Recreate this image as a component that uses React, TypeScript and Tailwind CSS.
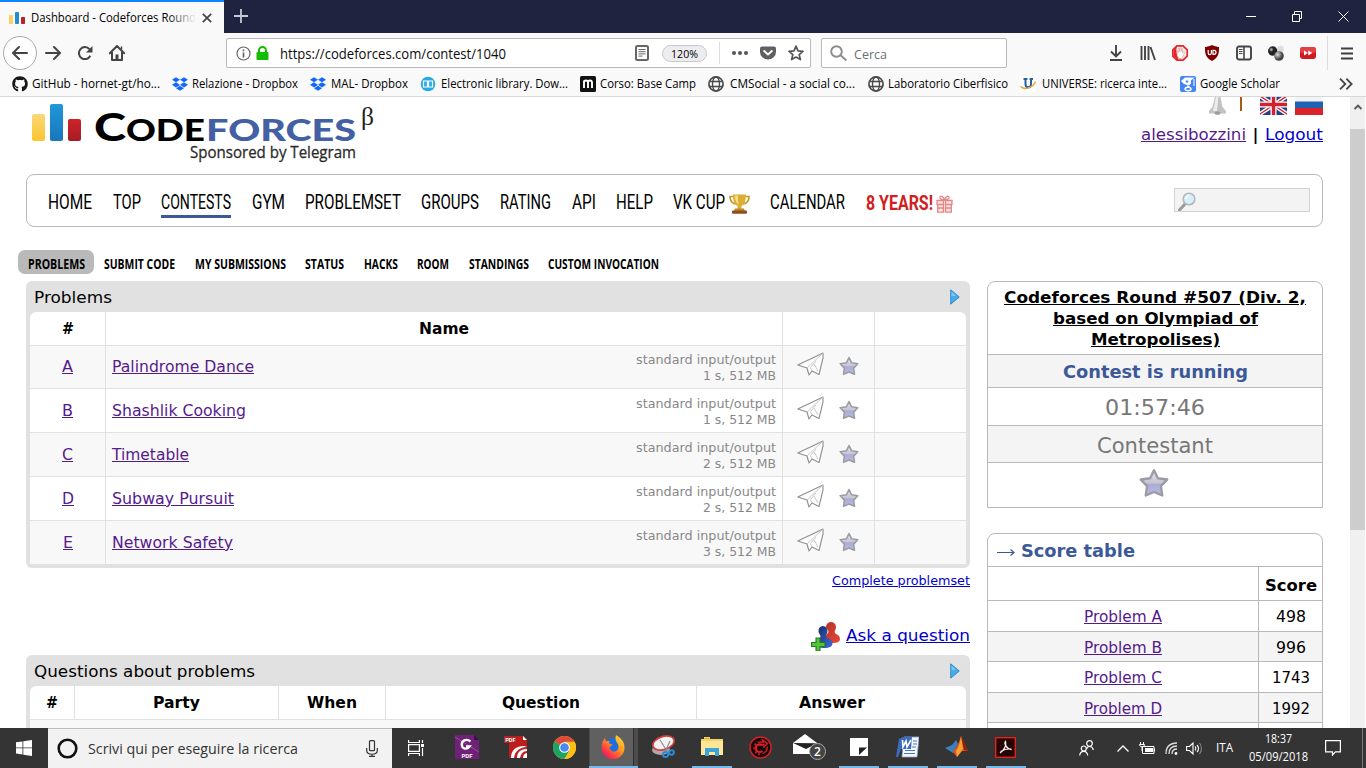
import React, { useLayoutEffect, useRef } from "react";
import { FaGithub, FaDropbox } from "react-icons/fa";

/* Single line of text stretched to the width of its box. */
function Fit({ className = "", children }: { className?: string; children: React.ReactNode }) {
  const outer = useRef<HTMLSpanElement>(null);
  const inner = useRef<HTMLSpanElement>(null);
  useLayoutEffect(() => {
    const o = outer.current;
    const i = inner.current;
    if (!o || !i || !i.offsetWidth) return;
    i.style.transform = `scaleX(${o.clientWidth / i.getBoundingClientRect().width})`;
  }, []);
  return (
    <span ref={outer} className={"block shrink-0 whitespace-nowrap " + className}>
      <span ref={inner} className="inline-block origin-left align-top [text-decoration:inherit]">
        {children}
      </span>
    </span>
  );
}

const UI = "font-['Open_Sans','Noto_Sans',sans-serif]";

/* ---------- browser chrome ---------- */

function Bars({ className }: { className: string }) {
  return (
    <svg className={className} viewBox="0 0 16 12">
      <rect x="0" y="3" width="4" height="9" rx=".8" fill="#fbd063" />
      <rect x="6" y="0" width="4" height="12" rx=".8" fill="#1f8fd0" />
      <rect x="12" y="5" width="4" height="7" rx=".8" fill="#c01e28" />
    </svg>
  );
}

function TabBar() {
  return (
    <div className="flex h-[33px] shrink-0 bg-[#202340]">
      <div className="flex w-[224px] items-center border-t-2 border-[#0a84ff] bg-[#f9f9fa] pl-[9px]">
        <Bars className="h-[12px] w-[16px]" />
        <div className="relative ml-[6px]">
          <Fit className={"w-[165px] text-[12px] leading-[20px] text-black " + UI}>Dashboard - Codeforces Round</Fit>
          <div className="absolute top-0 right-0 h-5 w-7 bg-linear-to-r from-transparent to-[#f9f9fa]" />
        </div>
        <svg className="ml-[6px] h-[10px] w-[10px]" viewBox="0 0 10 10" stroke="#444" strokeWidth="1.7">
          <path d="M.8.8l8.4 8.4M9.2.8L.8 9.2" />
        </svg>
      </div>
      <svg className="mt-[9px] ml-[10px] h-[14px] w-[14px]" viewBox="0 0 14 14" stroke="#c8c8d2" strokeWidth="1.8">
        <path d="M7 0v14M0 7h14" />
      </svg>
      <svg className="mt-[11px] ml-auto h-[11px] w-[104px]" viewBox="0 0 104 11" fill="none" stroke="#fff" strokeWidth="1">
        <path d="M0 5.500h10M46.500 3.500h7v7h-7zM48.500 3v-2.500h7v7h-2.500M92.500.5l10 10M102.500.5l-10 10" />
      </svg>
      <div className="w-[16px]" />
    </div>
  );
}

function Toolbar() {
  return (
    <div className={"flex h-[37px] shrink-0 items-center bg-[#f9f9fa] pt-[3px] " + UI}>
      <div className="ml-[3px] flex h-[34px] w-[34px] items-center justify-center rounded-full border border-[#a9a9a9] bg-white">
        <svg className="h-4 w-4" viewBox="0 0 16 16" fill="none" stroke="#444" strokeWidth="2" strokeLinecap="round" strokeLinejoin="round">
          <path d="M15 8H1.500M7 2L1 8l6 6" />
        </svg>
      </div>
      <svg className="ml-[8px] h-4 w-4" viewBox="0 0 16 16" fill="none" stroke="#444" strokeWidth="2" strokeLinecap="round" strokeLinejoin="round">
        <path d="M1 8h13.500M9 2l6 6-6 6" />
      </svg>
      <svg className="ml-[16px] h-4 w-4" viewBox="0 0 16 16" fill="none" stroke="#444" strokeWidth="2">
        <path d="M13.300 10.800A6 6 0 1 1 12.500 4.200" />
        <path d="M15.500 1v6.500H9z" fill="#444" stroke="none" />
      </svg>
      <svg className="ml-[16px] h-4 w-4" viewBox="0 0 16 16" fill="none" stroke="#444" strokeWidth="2" strokeLinejoin="round">
        <path d="M.8 8.200L8 1l7.200 7.200M3 7v8h10V7" strokeLinecap="round" />
        <path d="M6.500 15V9.500h3V15z" fill="#444" stroke="none" />
        <path d="M12.500 1.500v3" strokeWidth="1.500" />
      </svg>

      <div className="ml-[101px] flex h-[30px] w-[585px] items-center rounded-[2px] border border-[#b9b9bb] bg-white">
        <svg className="ml-[9px] h-[15px] w-[15px]" viewBox="0 0 15 15" fill="none" stroke="#666">
          <circle cx="7.500" cy="7.500" r="6.500" strokeWidth="1.200" />
          <path d="M7.500 6.500v5M7.500 3.500v1.800" strokeWidth="1.700" />
        </svg>
        <svg className="ml-[5px] h-[14px] w-[13px]" viewBox="0 0 13 14">
          <path d="M3 7V4.500a3.500 3.500 0 0 1 7 0V7" fill="none" stroke="#12bc00" strokeWidth="2" />
          <rect x=".5" y="6" width="12" height="8" rx="1" fill="#12bc00" />
        </svg>
        <Fit className="mt-[2px] ml-[11px] w-[226px] text-[14px] leading-[20px] text-[#0c0c0d]">https://codeforces.com/contest/1040</Fit>
        <svg className="ml-[129px] h-4 w-[14px]" viewBox="0 0 14 16" fill="none" stroke="#666">
          <rect x="1" y="1" width="12" height="14" rx="1.500" strokeWidth="2" />
          <path d="M3.500 4.500h7M3.500 6.700h7M3.500 8.900h7M3.500 11.100h4" />
        </svg>
        <div className="ml-[13px] flex h-[17px] w-[45px] justify-center rounded-full border border-[#c9c9cb] bg-[#ededf0]">
          <Fit className="w-[27px] text-[11px] leading-[16px] text-black">120%</Fit>
        </div>
        <div className="ml-[12px] h-[22px] w-px bg-[#dcdcde]" />
        <svg className="ml-[12px] h-[4px] w-4" viewBox="0 0 16 4" fill="#555">
          <circle cx="2" cy="2" r="2" /><circle cx="8" cy="2" r="2" /><circle cx="14" cy="2" r="2" />
        </svg>
        <svg className="ml-[12px] h-4 w-4" viewBox="0 0 16 16">
          <path d="M2 1.500h12a2 2 0 0 1 2 2V7a8 7.500 0 0 1-16 0V3.500a2 2 0 0 1 2-2z" fill="#606063" />
          <path d="M4.200 6L8 9.500 11.800 6" fill="none" stroke="#fff" strokeWidth="2" strokeLinecap="round" strokeLinejoin="round" />
        </svg>
        <svg className="ml-[12px] h-4 w-4" viewBox="0 0 16 16" fill="none" stroke="#555" strokeWidth="1.700" strokeLinejoin="round">
          <path d="M8 1.200l2 4.600 5 .5-3.800 3.300 1.200 5L8 12l-4.400 2.600 1.200-5L1 6.300l5-.5z" />
        </svg>
      </div>

      <div className="ml-[10px] flex h-[30px] w-[186px] items-center rounded-[2px] border border-[#b9b9bb] bg-white">
        <svg className="ml-[8px] h-4 w-[17px]" viewBox="0 0 17 16" fill="none" stroke="#8c8c8c" strokeWidth="1.900">
          <circle cx="6.500" cy="6.500" r="5.300" /><path d="M10.300 10l6 5.500" />
        </svg>
        <Fit className="mt-[2px] ml-[7px] w-[33px] text-[13px] leading-[20px] text-[#6f6f70]">Cerca</Fit>
      </div>

      <div className="ml-[93px] flex w-[224px] [&>div]:flex [&>div]:w-8 [&>div]:justify-center [&_svg]:h-4 [&_svg]:w-4">
        <div>
          <svg viewBox="0 0 16 16" fill="none" stroke="#444" strokeWidth="1.900"><path d="M8 0v11M3 6.500l5 5 5-5M2 15h12" /></svg>
        </div>
        <div>
          <svg viewBox="0 0 16 16" stroke="#444" strokeWidth="1.900" fill="none"><path d="M1.500 1v14M5 1v14M8.500 1v14M10.500 2l4.500 13" /></svg>
        </div>
        <div>
          <svg viewBox="0 0 16 16">
            <path d="M5 .8h6L15.200 5v6L11 15.200H5L.8 11V5z" fill="#f4f4f4" stroke="#ea2328" strokeWidth="1.700" />
            <path d="M5.200 10.500L4.600 6l1.200-.3.400 2V3.600h1.200l.3 3V2.800h1.200l.2 3.800.5-3h1.100l-.1 4.400 1-1.200 1 .6-1.800 4.400L9.500 13.500H7z" fill="#fff" stroke="#d9a0a0" strokeWidth=".7" />
            <path d="M1.500 5l3.200-3.300L4.300 6l.8 5 1.700 3.500H5L1.500 11z" fill="#ea2328" />
          </svg>
        </div>
        <div>
          <svg viewBox="0 0 16 16">
            <path d="M8 0c2 1.200 4.500 1.800 7 2 .2 7-1 11-7 14C2 13 .8 9 1 2c2.500-.2 5-.8 7-2z" fill="#800000" />
            <path d="M4.200 5v3a1.600 1.600 0 0 0 3.200 0V5" fill="none" stroke="#fff" strokeWidth="1.200" />
            <path d="M9 5.300h1a2 2 0 0 1 0 4H9z" fill="none" stroke="#fff" strokeWidth="1.200" />
          </svg>
        </div>
        <div>
          <svg viewBox="0 0 16 16" fill="none" stroke="#444">
            <rect x="1" y="1.500" width="14" height="13" rx="2" strokeWidth="1.900" />
            <path d="M8 2v12" strokeWidth="1.600" /><path d="M3 4.500h3.500M3 6.500h3.500M3 8.500h3.500" />
          </svg>
        </div>
        <div>
          <svg viewBox="0 0 16 16">
            <defs>
              <radialGradient id="ball" cx=".35" cy=".35"><stop offset="0" stopColor="#ddd" /><stop offset="1" stopColor="#444" /></radialGradient>
              <radialGradient id="dark" cx=".35" cy=".35"><stop offset="0" stopColor="#ccc" /><stop offset=".5" stopColor="#222" /></radialGradient>
            </defs>
            <circle cx="12.500" cy="4" r="3.300" fill="#ddd" /><circle cx="4.700" cy="6" r="4.700" fill="url(#dark)" /><circle cx="11" cy="11" r="4.800" fill="url(#ball)" />
          </svg>
        </div>
        <div>
          <svg viewBox="0 0 16 16">
            <rect y="2" width="16" height="12" rx="3" fill="#cf1a20" /><rect y="2" width="16" height="6" rx="3" fill="#e34146" />
            <path d="M4 5.500L8 8l-4 2.500zM8.300 5.500L12.300 8l-4 2.500z" fill="#fff" />
          </svg>
        </div>
      </div>
      <div className="ml-[3px] h-[34px] w-px bg-[#dcdcde]" />
      <svg className="ml-[13px] h-[13px] w-[12px]" viewBox="0 0 12 13" stroke="#3f3f40" strokeWidth="2"><path d="M0 1.500h12M0 6.500h12M0 11.500h12" /></svg>
    </div>
  );
}

function Globe() {
  return (
    <svg className="h-4 w-4" viewBox="0 0 16 16" fill="none" stroke="#4a4a4a" strokeWidth="1.300">
      <circle cx="8" cy="8" r="7.100" strokeWidth="1.700" /><ellipse cx="8" cy="8" rx="3.500" ry="7" /><path d="M1.500 5.500h13M1.500 10.500h13" />
    </svg>
  );
}

const bookmarks: { icon: React.ReactNode; text: string; cls: string }[] = [
  { icon: <FaGithub className="h-4 w-4 text-[#15181b]" />, text: "GitHub - hornet-gt/ho...", cls: "ml-[4px] w-[128px] mr-[12px]" },
  { icon: <FaDropbox className="h-4 w-4 text-[#1268fb]" />, text: "Relazione - Dropbox", cls: "ml-[4px] w-[106px] mr-[12px]" },
  { icon: <FaDropbox className="h-4 w-4 text-[#1268fb]" />, text: "MAL- Dropbox", cls: "ml-[5px] w-[77px] mr-[12px]" },
  {
    icon: (
      <svg className="h-4 w-4" viewBox="0 0 16 16">
        <circle cx="8" cy="8" r="7.300" fill="#29abe2" />
        <path d="M3.500 5h4v6h-4zM8.500 5h4v6h-4z" fill="none" stroke="#fff" strokeWidth="1.200" />
      </svg>
    ),
    text: "Electronic library. Dow...", cls: "ml-[5px] w-[127px] mr-[12px]",
  },
  {
    icon: (
      <svg className="h-4 w-4" viewBox="0 0 16 16">
        <rect width="16" height="16" rx="1.500" fill="#111" />
        <path d="M4 12V4.500M4 6.500a2 2 0 0 1 4 0V12M8 6.500a2 2 0 0 1 4 0V12" fill="none" stroke="#fff" strokeWidth="1.900" />
      </svg>
    ),
    text: "Corso: Base Camp", cls: "ml-[4px] w-[96px] mr-[12px]",
  },
  { icon: <Globe />, text: "CMSocial - a social co...", cls: "ml-[6px] w-[125px] mr-[13px]" },
  { icon: <Globe />, text: "Laboratorio Ciberfisico", cls: "ml-[4px] w-[120px] mr-[12px]" },
  {
    icon: (
      <svg className="h-4 w-4" viewBox="0 0 16 16" fill="none">
        <rect width="16" height="16" fill="#fff" />
        <path d="M5.500 3v5a2.500 3 0 0 0 5.500 0V3M3.500 3h4M9.500 3H13" stroke="#24639f" strokeWidth="2" />
        <path d="M.5 10.500c5 4.500 13 .5 15-5" stroke="#eaa53c" strokeWidth="1.500" />
      </svg>
    ),
    text: "UNIVERSE: ricerca inte...", cls: "ml-[6px] w-[125px] mr-[13px]",
  },
  {
    icon: (
      <svg className="h-4 w-4" viewBox="0 0 16 16" fill="none" stroke="#fff">
        <rect width="16" height="16" rx="2" fill="#4285f4" stroke="none" />
        <path d="M1 5l4-3.500h9.500L11 4.500v3L9 9.500 4 8z" fill="#fff" stroke="none" />
        <circle cx="7" cy="5.500" r="1.700" fill="#4285f4" /><path d="M8 9.500c-1 1.500 3 1.500 3 3.500s-5 2.500-6 .3c0-1.500 2-2.300 4.500-2.300" strokeWidth="1.500" /><path d="M14 3v7" />
      </svg>
    ),
    text: "Google Scholar", cls: "ml-[4px] w-[80px]",
  },
];

function Bookmarks() {
  return (
    <div className={"flex h-[27px] shrink-0 items-center border-b border-[#d7d7d7] bg-[#f9f9fa] pt-[2px] pl-[12px] text-[12px] leading-[20px] text-black " + UI}>
      {bookmarks.map((b) => (
        <React.Fragment key={b.text}>
          {b.icon}
          <Fit className={b.cls}>{b.text}</Fit>
        </React.Fragment>
      ))}
      <svg className="mr-[13px] ml-auto h-[12px] w-[14px]" viewBox="0 0 14 12" fill="none" stroke="#4a4a4a" strokeWidth="1.900">
        <path d="M1 .7L6.300 6 1 11.300M7.300.7L12.600 6l-5.300 5.300" />
      </svg>
    </div>
  );
}

/* ---------- page ---------- */

function StarIcon({ className }: { className: string }) {
  return (
    <svg className={className} viewBox="0 0 20 20">
      <defs>
        <linearGradient id="star" x1="0" y1="0" x2="0" y2="1">
          <stop offset="0" stopColor="#e2e2e6" /><stop offset=".5" stopColor="#c6c6d4" /><stop offset=".55" stopColor="#abacd2" /><stop offset="1" stopColor="#b9bbea" />
        </linearGradient>
      </defs>
      <path d="M10 1.500l2.600 5.300 6.200.9-4.200 4.400.9 6.200L10 16l-5.500 2.300.9-6.200L1.200 7.700l6.200-.9z" fill="url(#star)" stroke="#9c9ca6" strokeWidth="1.600" strokeLinejoin="round" />
    </svg>
  );
}

function Plane() {
  return (
    <svg className="h-[24px] w-[27px]" viewBox="0 0 27 24" fill="#fdfdfd" stroke="#8f8f8f" strokeWidth="1.100" strokeLinejoin="round">
      <path d="M26 1L.8 13l9.200 3 2 7 3-4 7 3.500L26 6z" />
      <path d="M26 1L10 16M15 19L13.500 15.500M17 12l4 7M19 9l-5.500 6.500" fill="none" stroke="#c4c4c4" strokeWidth=".9" />
    </svg>
  );
}

function Arrow() {
  return (
    <svg className="h-[16px] w-[10px]" viewBox="0 0 10 16">
      <path d="M.7.8L9.300 8 .7 15.200z" fill="#4baae3" stroke="#2f8fd3" strokeLinejoin="round" />
      <path d="M1.500 2.500L6 7H1.500z" fill="#7cc6ef" />
    </svg>
  );
}

function Header() {
  return (
    <div className="flex h-[77px] shrink-0">
      <svg className="ml-[6px] h-[70px] w-[345px]" viewBox="32 97 345 70">
        <defs>
          <linearGradient id="ly" x1="0" y1="0" x2="0" y2="1"><stop offset="0" stopColor="#fbd779" /><stop offset="1" stopColor="#fbc52e" /></linearGradient>
          <linearGradient id="lb" x1="0" y1="0" x2="0" y2="1"><stop offset="0" stopColor="#2098d8" /><stop offset="1" stopColor="#1a75bb" /></linearGradient>
          <linearGradient id="lr" x1="0" y1="0" x2="0" y2="1"><stop offset="0" stopColor="#cf2229" /><stop offset="1" stopColor="#a51d24" /></linearGradient>
        </defs>
        <rect x="32" y="114" width="13" height="27" rx="2" fill="url(#ly)" />
        <rect x="50" y="104" width="13" height="37" rx="2" fill="url(#lb)" />
        <rect x="68" y="119" width="13" height="22" rx="2" fill="url(#lr)" />
        <g className="font-['Lato',sans-serif] font-black">
          <text x="94" y="141" fontSize="37" textLength="32" lengthAdjust="spacingAndGlyphs" fill="#000">C</text>
          <text x="126" y="141" fontSize="31" textLength="79" lengthAdjust="spacingAndGlyphs" fill="#000">ODE</text>
          <text x="206" y="141" fontSize="31" textLength="150" lengthAdjust="spacingAndGlyphs" fill="#4260a3">FORCES</text>
        </g>
        <text x="190" y="158" fontSize="16" textLength="166" lengthAdjust="spacingAndGlyphs" fill="#2b2b2b" stroke="#2b2b2b" strokeWidth=".3" className="font-['Open_Sans',sans-serif]">Sponsored by Telegram</text>
        <text x="361" y="125" fontSize="26" textLength="13" lengthAdjust="spacingAndGlyphs" fill="#222" className="font-['Liberation_Serif',serif]">β</text>
      </svg>
      <div className="ml-auto flex w-[182px] flex-col">
        <div className="flex h-[19px] items-start pl-[67px]">
          <svg className="h-[18px] w-[19px]" viewBox="0 0 19 18">
            <path d="M7 0h5.500l2 10 3.500 4v2.500H1V14l3.500-4z" fill="#c2c2c2" /><path d="M8 0h2.500L9 14H5z" fill="#ececec" /><ellipse cx="9.500" cy="16" rx="3" ry="1.800" fill="#9c9c9c" />
          </svg>
          <div className="ml-[13px] h-[14px] w-[2px] bg-[#a85a10]" />
          <svg className="ml-[18px] h-[18px] w-[27px]" viewBox="0 0 27 18">
            <rect width="27" height="18" fill="#2b3f86" />
            <path d="M0-1L27 17M27-1L0 17" stroke="#fff" strokeWidth="4" /><path d="M0-1L27 17M27-1L0 17" stroke="#d3202f" strokeWidth="1.400" />
            <path d="M13.500 0v18M0 7.500h27" stroke="#fff" strokeWidth="6" /><path d="M13.500 0v18M0 7.500h27" stroke="#d3202f" strokeWidth="3.400" />
          </svg>
          <svg className="ml-[8px] h-[18px] w-[28px]" viewBox="0 0 28 18">
            <rect width="28" height="18" fill="#f4f4f4" /><rect y="4.500" width="28" height="7" fill="#2063b4" /><rect y="11" width="28" height="7" fill="#dc2128" />
          </svg>
        </div>
        <div className="mt-[9px] flex text-[16.500px] leading-[20px]">
          <Fit className="w-[105px] text-[#551a8b] underline">alessibozzini</Fit>
          <Fit className="ml-[6px] w-[7px]">|</Fit>
          <Fit className="ml-[6px] w-[58px] text-[#0000cc] underline">Logout</Fit>
        </div>
      </div>
    </div>
  );
}

const menu: [string, string][] = [
  ["HOME", "ml-[21px] w-[44px]"],
  ["TOP", "ml-[21px] w-[28px]"],
  ["CONTESTS", "ml-[20px] w-[70px] h-[30px] border-b-3 border-[#3b5998]"],
  ["GYM", "ml-[21px] w-[33px]"],
  ["PROBLEMSET", "ml-[20px] w-[96px]"],
  ["GROUPS", "ml-[20px] w-[58px]"],
  ["RATING", "ml-[21px] w-[51px]"],
  ["API", "ml-[21px] w-[24px]"],
  ["HELP", "ml-[20px] w-[37px]"],
  ["VK CUP", "ml-[20px] w-[52px]"],
];

function Menu() {
  return (
    <div className="flex h-[53px] shrink-0 items-start rounded-lg border border-[#b9b9b9] pt-[13px] pr-[12px] font-['Roboto',sans-serif] text-[19.500px] leading-[30px] text-black">
      {menu.map(([t, c]) => (
        <Fit key={t} className={c}>{t}</Fit>
      ))}
      <svg className="mt-[6px] ml-[4px] h-[20px] w-[21px]" viewBox="0 0 21 20">
        <path d="M4.500 2.500H1c0 5 2.500 7 6 7.500M16.500 2.500H20c0 5-2.500 7-6 7.500" fill="none" stroke="#c9971f" strokeWidth="1.600" />
        <path d="M4 .5h13c0 6-1.500 10-4.500 11.500V15h-4v-3C5.500 10.500 4 6.500 4 .5z" fill="#dcae34" />
        <path d="M6 1.500h3c-.5 4 0 7 1 9.500C7 9 6 6 6 1.500z" fill="#f8e08a" />
        <path d="M6 14.500h9l1 2.500H5z" fill="#c08a2c" /><rect x="3" y="16.500" width="15" height="3.200" rx="1" fill="#8d4f1c" />
      </svg>
      <Fit className="ml-[20px] w-[75px]">CALENDAR</Fit>
      <Fit className="ml-[21px] mt-px w-[67px] font-bold text-[#d0211f]">8 YEARS!</Fit>
      <svg className="mt-[7px] ml-[3px] h-[18px] w-[17px]" viewBox="0 0 17 18" fill="none" stroke="#e58585" strokeWidth="1.300">
        <path d="M1 5.500h6.500v4H1zM9.500 5.500H16v4H9.500zM1.700 9.500h5.800v7.700H1.700zM9.500 9.500h5.800v7.700H9.500z" fill="#fae5e5" />
        <path d="M8 5C5 5 3.500 3.500 4 2s3.500-1 4.500 3C9.500 1 12.500.5 13 2s-1.500 3-4 3z" /><path d="M2 13h5M10 13h5" />
      </svg>
      <div className="ml-auto h-[24px] w-[136px] border border-[#d3d3d3] bg-[#f3f3f3]">
        <svg className="mt-[3px] ml-[3px] h-[19px] w-[18px]" viewBox="0 0 18 19">
          <path d="M7 12l-5.500 6" stroke="#9a9a9a" strokeWidth="3" strokeLinecap="round" />
          <circle cx="11" cy="7" r="5.800" fill="#d6effc" stroke="#b3b7ba" strokeWidth="1.600" /><path d="M8 7a3 3 0 0 1 3-3" stroke="#fff" strokeWidth="1.500" fill="none" />
        </svg>
      </div>
    </div>
  );
}

function SubMenu() {
  return (
    <div className="mt-[23px] -ml-[8px] flex h-[24px] shrink-0 font-['Open_Sans',sans-serif] text-[13.500px] leading-[28px] font-bold text-black">
      <div className="flex w-[76px] justify-center rounded-[7px] bg-[#b9b9b9]"><Fit className="w-[57px]">PROBLEMS</Fit></div>
      <Fit className="ml-[10px] w-[71px]">SUBMIT CODE</Fit>
      <Fit className="ml-[20px] w-[91px]">MY SUBMISSIONS</Fit>
      <Fit className="ml-[19px] w-[39px]">STATUS</Fit>
      <Fit className="ml-[20px] w-[34px]">HACKS</Fit>
      <Fit className="ml-[19px] w-[32px]">ROOM</Fit>
      <Fit className="ml-[20px] w-[60px]">STANDINGS</Fit>
      <Fit className="ml-[19px] w-[111px]">CUSTOM INVOCATION</Fit>
    </div>
  );
}

const problems = [
  { id: "A", name: "Palindrome Dance", w: "w-[142px]", lim: "1 s, 512 MB", row: "h-[42px] [&>div]:bg-[#f8f8f8]", idw: "w-[11px]" },
  { id: "B", name: "Shashlik Cooking", w: "w-[134px]", lim: "1 s, 512 MB", row: "h-[43px] [&>div]:bg-white", idw: "w-[11px]" },
  { id: "C", name: "Timetable", w: "w-[77px]", lim: "2 s, 512 MB", row: "h-[43px] [&>div]:bg-[#f8f8f8]", idw: "w-[11px]" },
  { id: "D", name: "Subway Pursuit", w: "w-[122px]", lim: "2 s, 512 MB", row: "h-[43px] [&>div]:bg-white", idw: "w-[12px]" },
  { id: "E", name: "Network Safety", w: "w-[121px]", lim: "3 s, 512 MB", row: "h-[43px] [&>div]:bg-[#f8f8f8]", idw: "w-[10px]" },
];

function ProblemsBox() {
  return (
    <div className="rounded-[6px] bg-[#e1e1e1] px-[4px] pb-[4px]">
      <div className="flex h-[31px] items-center justify-between pr-[6px] pl-[4px]">
        <Fit className="mt-[2px] w-[78px] leading-[20px]">Problems</Fit>
        <Arrow />
      </div>
      <div className="flex flex-col gap-px overflow-hidden rounded-t-[6px]">
        <div className="flex h-[33px] gap-px font-bold [&>div]:flex [&>div]:items-center [&>div]:justify-center [&>div]:bg-white">
          <div className="w-[75px]"><Fit className="w-[12px]">#</Fit></div>
          <div className="w-[676px]"><Fit className="w-[50px]">Name</Fit></div>
          <div className="w-[91px]" />
          <div className="w-[91px]" />
        </div>
        {problems.map((p) => (
          <div key={p.id} className={"flex shrink-0 gap-px [&>div]:flex [&>div]:items-center " + p.row}>
            <div className="w-[75px] justify-center"><Fit className={"text-[#551a8b] underline " + p.idw}>{p.id}</Fit></div>
            <div className="w-[676px] justify-between pr-[6px] pl-[6px]">
              <Fit className={"text-[#551a8b] underline " + p.w}>{p.name}</Fit>
              <div className="flex flex-col items-end pt-[2px] text-[13px] leading-[16px] text-[#888]">
                <Fit className="w-[140px]">standard input/output</Fit>
                <Fit className="w-[73px]">{p.lim}</Fit>
              </div>
            </div>
            <div className="w-[91px] pl-[14px]">
              <div className="-mt-[6px]"><Plane /></div>
              <StarIcon className="-mt-[2px] ml-[15px] h-[20px] w-[20px]" />
            </div>
            <div className="w-[91px]" />
          </div>
        ))}
      </div>
    </div>
  );
}

function Ask() {
  return (
    <div className="mt-[28px] flex h-[34px] items-center justify-end">
      <svg className="h-[29px] w-[29px]" viewBox="0 0 29 29">
        <defs>
          <linearGradient id="rd" x1="0" y1="0" x2="1" y2="1"><stop offset="0" stopColor="#b43222" /><stop offset="1" stopColor="#e8473a" /></linearGradient>
          <linearGradient id="bl" x1="0" y1="0" x2="1" y2="1"><stop offset="0" stopColor="#16275f" /><stop offset="1" stopColor="#3f6fe0" /></linearGradient>
        </defs>
        <path d="M20 0a5 5 0 0 1 5 5c0 3-2 4-1 6 1 1.500 5 2 5 6 0 3-3 4-8 4s-7-2-7-5 3-4 3.500-6S15 7 15 5a5 5 0 0 1 5-5z" fill="url(#rd)" />
        <path d="M12 4a5 5 0 0 1 4.500 5c0 3-2 4-1 6s6 2 6 6.500c0 3-3 4.500-8 4.500S5 24 5.500 21 9 17 9.500 15 7 11 7.500 9A5 5 0 0 1 12 4z" fill="url(#bl)" />
        <path d="M5 16h4v4.500h5v4H9V29H5v-4.500H.5v-4H5z" fill="#55c43c" stroke="#217d18" strokeWidth="1.100" />
      </svg>
      <Fit className="ml-[6px] w-[124px] text-[#0000cc] underline">Ask a question</Fit>
    </div>
  );
}

function QuestionsBox() {
  return (
    <div className="mt-[2px] rounded-t-[6px] bg-[#e1e1e1] px-[4px]">
      <div className="flex h-[31px] items-center justify-between pr-[6px] pl-[4px]">
        <Fit className="mt-[2px] w-[221px] leading-[20px]">Questions about problems</Fit>
        <Arrow />
      </div>
      <div className="flex h-[33px] gap-px overflow-hidden rounded-t-[6px] font-bold [&>div]:flex [&>div]:items-center [&>div]:justify-center [&>div]:bg-white">
        <div className="w-[44px]"><Fit className="w-[12px]">#</Fit></div>
        <div className="w-[203px]"><Fit className="w-[47px]">Party</Fit></div>
        <div className="w-[106px]"><Fit className="w-[50px]">When</Fit></div>
        <div className="w-[310px]"><Fit className="w-[78px]">Question</Fit></div>
        <div className="w-[269px]"><Fit className="w-[66px]">Answer</Fit></div>
      </div>
      <div className="mt-px h-[20px] bg-[#f8f8f8]" />
    </div>
  );
}

const scores = [
  { p: "Problem A", s: "498", w: "w-[30px]", row: "h-[31px]" },
  { p: "Problem B", s: "996", w: "w-[30px]", row: "h-[30px] bg-[#f4f4f4]" },
  { p: "Problem C", s: "1743", w: "w-[38px]", row: "h-[31px]" },
  { p: "Problem D", s: "1992", w: "w-[38px]", row: "h-[30px] bg-[#f4f4f4]" },
];

function Sidebar() {
  return (
    <div className="ml-[17px] w-[336px]">
      <div className="flex flex-col overflow-hidden rounded-t-lg border border-[#b9b9b9] [&>div]:flex [&>div]:items-center [&>div]:justify-center">
        <div className="h-[73px] flex-col border-b border-[#b9b9b9] leading-[21px] font-bold underline">
          <Fit className="w-[302px] underline">Codeforces Round #507 (Div. 2,</Fit>
          <Fit className="w-[205px] underline">based on Olympiad of</Fit>
          <Fit className="w-[129px] underline">Metropolises)</Fit>
        </div>
        <div className="h-[33px] border-b border-[#b9b9b9] bg-[#f4f4f4] pt-[2px] text-[18px] font-bold text-[#3b5998]"><Fit className="w-[185px]">Contest is running</Fit></div>
        <div className="h-[38px] border-b border-[#b9b9b9] pt-[2px] text-[22px] text-[#777]"><Fit className="w-[100px]">01:57:46</Fit></div>
        <div className="h-[37px] border-b border-[#b9b9b9] bg-[#f4f4f4] pt-[3px] text-[22px] text-[#777]"><Fit className="w-[116px]">Contestant</Fit></div>
        <div className="h-[44px] pr-[2px] pb-[5px]"><StarIcon className="h-[30px] w-[30px]" /></div>
      </div>
      <div className="mt-[25px] rounded-t-lg border border-[#b9b9b9]">
        <div className="flex h-[33px] items-center border-b border-[#b9b9b9] pt-[2px] pl-[9px] text-[18px] text-[#3b5998]">
          <svg className="mt-[3px] h-[9px] w-[18px]" viewBox="0 0 18 9" fill="none" stroke="#3b5998" strokeWidth="1.200"><path d="M0 4.500h17M13.500 1.500l3.500 3-3.500 3" /></svg>
          <Fit className="ml-[6px] w-[114px] font-bold">Score table</Fit>
        </div>
        <div className="flex h-[34px] border-b border-[#b9b9b9] font-bold">
          <div className="w-[271px] border-r border-[#b9b9b9]" />
          <div className="flex flex-1 items-center justify-center pt-[4px]"><Fit className="w-[52px]">Score</Fit></div>
        </div>
        {scores.map((r) => (
          <div key={r.p} className={"flex border-b border-[#b9b9b9] text-[15px] " + r.row}>
            <div className="flex w-[271px] items-center justify-center border-r border-[#b9b9b9] pt-[2px]"><Fit className="w-[78px] text-[#551a8b] underline">{r.p}</Fit></div>
            <div className="flex flex-1 items-center justify-center pt-[2px]"><Fit className={r.w}>{r.s}</Fit></div>
          </div>
        ))}
        <div className="h-[31px] w-[271px] border-r border-[#b9b9b9]" />
      </div>
    </div>
  );
}

function Page() {
  return (
    <div className="flex h-[631px] shrink-0 overflow-hidden bg-white font-['DejaVu_Sans',sans-serif] text-[16.500px] leading-[20px] text-black">
      <div className="ml-[26px] flex h-[631px] w-[1297px] flex-col overflow-visible">
        <Header />
        <Menu />
        <SubMenu />
        <div className="mt-[7px] flex shrink-0">
          <div className="w-[944px]">
            <ProblemsBox />
            <div className="flex justify-end pt-[3px] text-[13px]">
              <Fit className="w-[138px] text-[#0000cc] underline">Complete problemset</Fit>
            </div>
            <Ask />
            <QuestionsBox />
          </div>
          <Sidebar />
        </div>
      </div>
      <div className="ml-auto flex w-[16px] flex-col items-center border-r border-white bg-[#f0f0f0]">
        <div className="flex h-[32px] items-start pt-[7px]">
          <svg className="h-[6px] w-[8px]" viewBox="0 0 8 6" fill="none" stroke="#555" strokeWidth="1.800"><path d="M.6 5L4 1.500 7.400 5" /></svg>
        </div>
        <div className="h-[401px] w-full bg-[#cdcdcd]" />
      </div>
    </div>
  );
}

/* ---------- taskbar ---------- */

const apps: { key: string; cell: string; active?: boolean; icon: React.ReactNode }[] = [
  {
    key: "foxit", cell: "border-transparent",
    icon: (
      <svg className="h-6 w-6" viewBox="0 0 24 24">
        <path d="M0 0h19l5 5v19H0z" fill="#6f2177" /><path d="M19 0v5h5z" fill="#3b0f44" /><path d="M0 2l24 15" stroke="#a770ab" strokeWidth=".6" />
        <path d="M15.500 6.500C11 3 6.500 6 6.800 10s5 5 7.700 1.500H11" fill="none" stroke="#fff" strokeWidth="2.400" />
        <text x="6.500" y="22.500" fontSize="6" fill="#fff" className="font-['Roboto',sans-serif] font-bold">PDF</text>
      </svg>
    ),
  },
  {
    key: "pdf", cell: "border-transparent",
    icon: (
      <svg className="h-6 w-6" viewBox="0 0 24 24">
        <path d="M5 1h14l4 4v18H5z" fill="#c01c1c" /><path d="M19 1v4h4z" fill="#fff" />
        <path d="M7 23c0-8 5-12 13-12l3 1c-7 0-12 4-13 11zM13 23c0-6 4-9 10-9v2c-4 0-6 3-7 7zM19 23c0-3 1.500-4.500 4-5v5z" fill="#fff" />
        <rect y="1" width="13" height="7" fill="#a92626" /><text x="1.300" y="6.800" fontSize="5.500" fill="#fff" className="font-['Roboto',sans-serif] font-bold">PDF</text>
      </svg>
    ),
  },
  {
    key: "chrome", cell: "border-transparent",
    icon: (
      <svg className="h-[23px] w-[23px]" viewBox="0 0 24 24">
        <circle cx="12" cy="12" r="12" fill="#fbc116" />
        <path d="M12 12L1.600 6A12 12 0 0 1 22.400 6z" fill="#dd4b3e" /><path d="M12 12L1.600 6A12 12 0 0 0 12 24l5.200-9z" fill="#1da362" /><path d="M22.400 6H12v6l5.200 3L12 24A12 12 0 0 0 22.400 6z" fill="#fbc116" />
        <circle cx="12" cy="12" r="5.600" fill="#fff" /><circle cx="12" cy="12" r="4.500" fill="#4a8af4" />
      </svg>
    ),
  },
  {
    key: "firefox", cell: "border-[#76b9ed]", active: true,
    icon: (
      <svg className="h-[24px] w-[24px]" viewBox="0 0 24 24">
        <defs><linearGradient id="ff" x1="1" y1="0" x2=".2" y2="1"><stop offset="0" stopColor="#ffe83e" /><stop offset=".45" stopColor="#ff9a1c" /><stop offset=".8" stopColor="#ff3647" /><stop offset="1" stopColor="#d81b7c" /></linearGradient></defs>
        <circle cx="12" cy="12" r="9" fill="#1a6fe0" />
        <path d="M15 0c5 3 8.500 6.500 8.500 12.500A11.500 11.500 0 0 1 .5 13C.5 8 2 5 4 3l.8 3L9 6c-2 2-1 3 2.500 3.500-.5 2-3 1.500-3 3.500 2 5.500 9 4 9-1 0-4-3-5-3-8 0-2 .3-3 .5-4z" fill="url(#ff)" />
      </svg>
    ),
  },
  {
    key: "snip", cell: "border-transparent",
    icon: (
      <svg className="h-6 w-6" viewBox="0 0 24 24">
        <ellipse cx="10" cy="15" rx="9" ry="5" fill="#b9a5a5" /><ellipse cx="12.500" cy="8" rx="11" ry="6.500" transform="rotate(-18 12.500 8)" fill="#f3f3f3" stroke="#d23c3c" strokeWidth="1.700" />
        <path d="M9 5l7 11M19 6l-4.500 10" stroke="#888" strokeWidth="1.100" /><circle cx="14.500" cy="19.500" r="2.600" fill="none" stroke="#2c8bd3" strokeWidth="2" /><circle cx="20.500" cy="17.500" r="2.300" fill="none" stroke="#2c8bd3" strokeWidth="2" />
      </svg>
    ),
  },
  {
    key: "explorer", cell: "border-[#76b9ed]",
    icon: (
      <svg className="h-[20px] w-[22px]" viewBox="0 0 22 20">
        <path d="M0 2h3V0h6v2h13v16H0z" fill="#f3d06b" /><path d="M0 4h22v14H0z" fill="#ffe797" /><path d="M4 11h14v8h-4v-4H8v4H4z" fill="#3aa5dc" /><path d="M3 2l1-1h4v1z" fill="#e7a52f" />
      </svg>
    ),
  },
  {
    key: "gear", cell: "border-transparent",
    icon: (
      <svg className="h-[23px] w-[23px]" viewBox="0 0 24 24" fill="none" stroke="#d91f26">
        <circle cx="12" cy="12" r="11" fill="#16090a" strokeWidth="1.500" />
        <path d="M14 10a4 4 0 1 0 0 5.500" strokeWidth="2.200" /><path d="M4.500 13h2M6 8l1.500 1.500M10.500 18v2M6.500 17.500L8 16" strokeWidth="1.800" />
        <path d="M9 6.500h6l-1-2.500 5.500 4-4 3.500V9h-5M19 11c.5 3-1 6-5 7.500" strokeWidth="1.300" fill="#d91f26" fillOpacity=".3" />
      </svg>
    ),
  },
  {
    key: "mail", cell: "border-transparent",
    icon: (
      <svg className="h-[28px] w-[35px]" viewBox="0 0 35 28">
        <path d="M1 10L13 1l12 9v11H1z" fill="#fff" /><path d="M1 10l24 .3L14 16z" fill="#222" /><circle cx="25.500" cy="18.500" r="8" fill="#444" stroke="#aaa" />
        <text x="22" y="23" fontSize="12" fill="#fff" className="font-['Open_Sans',sans-serif] font-semibold">2</text>
      </svg>
    ),
  },
  {
    key: "notes", cell: "border-[#76b9ed]",
    icon: <svg className="h-[18px] w-[18px]" viewBox="0 0 18 18"><path d="M0 0h18v18H0z" fill="#fff" /><path d="M9 17V9.500h8z" fill="#222" /></svg>,
  },
  {
    key: "word", cell: "border-[#76b9ed]",
    icon: (
      <svg className="h-[22px] w-[23px]" viewBox="0 0 23 22">
        <path d="M8 1h15l-2 20H6z" fill="#f4f7fc" stroke="#8ba8d8" strokeWidth=".8" /><path d="M17 5h4M17 8h4M16 11h4M9 14.500h10M8 17.500h11" stroke="#4c78c0" strokeWidth="1.200" />
        <path d="M3 3l4-2h9l-1 12H5L2 21H0z" fill="#3b6cc0" /><path d="M6.500 4l.5 7 3-6 1 6 4-7" fill="none" stroke="#fff" strokeWidth="1.600" />
      </svg>
    ),
  },
  {
    key: "matlab", cell: "border-[#76b9ed]",
    icon: (
      <svg className="h-[22px] w-[23px]" viewBox="0 0 23 22">
        <path d="M0 12l7-3 4-5 2 4-5 9z" fill="#3c7fbd" /><path d="M16 0l7 15-6 0-5 6-4-5C11 12 14 7 16 0z" fill="#e0561c" /><path d="M16 0l2 13-6 8-1-6c3-4 4-9 5-15z" fill="#f9a12e" /><path d="M16 0l7 15-4-1z" fill="#8f1d11" />
      </svg>
    ),
  },
  {
    key: "acrobat", cell: "border-[#76b9ed]",
    icon: (
      <svg className="h-[21px] w-[21px]" viewBox="0 0 21 21">
        <rect x=".7" y=".7" width="19.600" height="19.600" fill="#250505" stroke="#e32319" strokeWidth="1.400" />
        <path d="M5 16c4-3 6.500-7 5.500-11.500C9 6 11 12 16.500 12.500c-3-1.500-7 0-11 2" fill="none" stroke="#f6f0ee" strokeWidth="1.300" />
      </svg>
    ),
  },
];

function Taskbar() {
  return (
    <div className={"flex h-[40px] shrink-0 bg-[#343434] text-[12px] text-white " + UI}>
      <div className="flex w-[48px] items-center justify-center">
        <svg className="h-[16px] w-[16px]" viewBox="0 0 16 16" fill="#fff"><path d="M0 2.300L6.500 1.400v6.100H0zM7.300 1.300L16 0v7.500H7.300zM0 8.300h6.500v6.200L0 13.600zM7.300 8.300H16V16l-8.700-1.300z" /></svg>
      </div>
      <div className="flex w-[344px] items-center border-t border-[#bdbdbd] bg-[#f2f2f2] pl-[9px]">
        <svg className="h-[21px] w-[21px]" viewBox="0 0 21 21"><circle cx="10.500" cy="10.500" r="8.800" fill="none" stroke="#111" strokeWidth="2.600" /></svg>
        <Fit className="ml-[10px] w-[210px] text-[14px] leading-[20px] text-[#333]">Scrivi qui per eseguire la ricerca</Fit>
        <svg className="ml-[68px] h-[17px] w-[12px]" viewBox="0 0 12 17" fill="none" stroke="#333" strokeWidth="1.200">
          <rect x="3.500" y=".7" width="5" height="10" rx="1" /><path d="M.7 8v2.500c0 5 10.600 5 10.600 0V8M6 14v2.500M3 16.300h6" />
        </svg>
      </div>
      <div className="flex w-[50px] items-center pl-[16px]">
        <svg className="h-[16px] w-[17px]" viewBox="0 0 17 16" fill="none" stroke="#fff" strokeWidth="1.200">
          <path d="M.6 0v2.500h10.800V0M.6 16v-2.500h10.800V16M.6 4.700h10.800v6.600H.6zM14.500 0v3M14.500 8v8" /><path d="M13 4h3v3h-3z" fill="#fff" stroke="none" />
        </svg>
      </div>
      {apps.map((a) => (
        <div key={a.key} className="flex w-[49px] justify-center">
          {a.active ? (
            <div className={"flex w-[49px] border-b-2 bg-[#4c4c4c] " + a.cell}>
              <div className="ml-px flex w-[44px] items-center justify-center border-r border-[#2f2f2f] bg-[#606060] pl-[3px]">{a.icon}</div>
            </div>
          ) : (
            <div className={"flex w-[40px] items-center justify-center border-b-2 " + a.cell}>{a.icon}</div>
          )}
        </div>
      ))}
      <div className="ml-[49px] flex items-center">
        <svg className="h-[16px] w-[15px]" viewBox="0 0 15 16" fill="none" stroke="#fff" strokeWidth="1.200">
          <circle cx="10.500" cy="3.500" r="2.800" /><path d="M7.500 9c1-3.500 6-3.500 6.800 1" /><circle cx="4.800" cy="8.500" r="2.500" /><path d="M.7 15.500c.5-5.500 7.500-5.500 8 0" />
        </svg>
        <svg className="ml-[23px] h-[7px] w-[12px]" viewBox="0 0 12 7" fill="none" stroke="#fff" strokeWidth="1.300"><path d="M.5 6.500L6 1l5.500 5.500" /></svg>
        <svg className="ml-[10px] h-[13px] w-[16px]" viewBox="0 0 16 13" fill="none" stroke="#fff">
          <path d="M3.500 4.500H15v7H3.500zM15.500 6.500v3M1.500 0v2.500M4.500 0v2.500M.5 2.500h5c0 3-5 3-5 0M3 5v4" /><path d="M6 6h8v4H6z" fill="#fff" stroke="none" />
        </svg>
        <svg className="ml-[10px] h-[13px] w-[13px]" viewBox="0 0 13 13" fill="none" stroke="#ddd" strokeWidth="1.300">
          <path d="M1 12C1 5 5 1 12 1M4 12c0-5 3-8 8-8M7 12c0-3 2-5 5-5" /><circle cx="11" cy="11.500" r="1.400" fill="#fff" stroke="none" />
        </svg>
        <svg className="ml-[8px] h-[13px] w-[17px]" viewBox="0 0 17 13" fill="none" stroke="#fff" strokeWidth="1.100">
          <path d="M.6 4.500h2.900L7 1v11L3.500 8.500H.6zM9 4.500c1 1 1 3 0 4M11 3c2 2 2 5 0 7" /><path d="M13.500 1c2.500 3 2.500 8 0 11" stroke="#888" />
        </svg>
        <Fit className="ml-[13px] w-[17px]">ITA</Fit>
        <div className="ml-[15px] flex w-[60px] flex-col items-center text-[12px] leading-[18px]">
          <Fit className="w-[27px]">18:37</Fit>
          <Fit className="w-[59px]">05/09/2018</Fit>
        </div>
        <svg className="ml-[17px] h-[16px] w-[16px]" viewBox="0 0 16 16" fill="none" stroke="#fff" strokeWidth="1.200"><path d="M.6.6h14.800v11.300h-5L7.500 15v-3.100H.6z" /></svg>
      </div>
      <div className="mr-[3px] ml-auto w-px bg-[#777]" />
    </div>
  );
}

export default function App() {
  return (
    <div className="flex h-[768px] w-[1366px] flex-col overflow-hidden bg-white">
      <TabBar />
      <Toolbar />
      <Bookmarks />
      <Page />
      <Taskbar />
    </div>
  );
}
